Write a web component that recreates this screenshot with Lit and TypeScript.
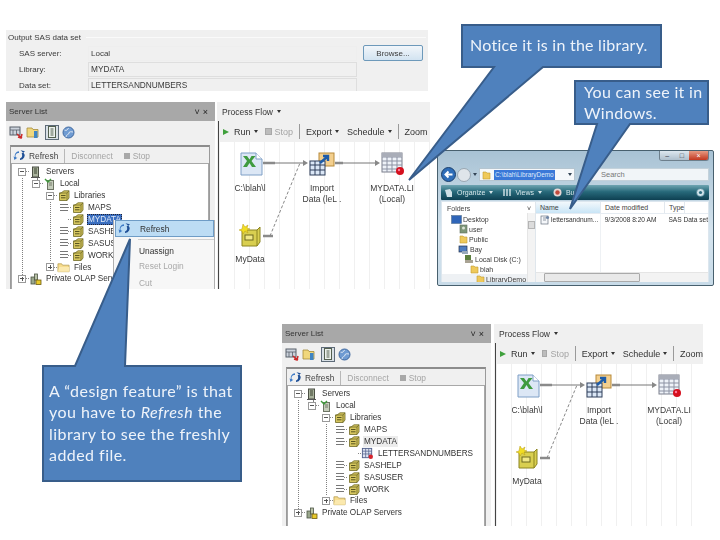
import { LitElement, html, css } from "lit";
import { customElement } from "lit/decorators.js";

const shortcut = (x: number, y: number) => html`<g transform="translate(${x} ${y})"><rect width="8" height="8" fill="#fff" stroke="#222"/><path d="M2 6.5V3h3M2.5 3.5l3 3" stroke="#111" fill="none" stroke-width="1.2"/></g>`;

const icons = {
  refresh: html`<svg width="13" height="13" viewBox="0 0 13 13"><path d="M6 2.2A4.5 4.5 0 0 0 2 8.2L.6 7.2 1.4 11l3-2.2-1.4-.2A3 3 0 0 1 6 4z" fill="#3b78c4"/><path d="M7.5 1.2 10 3.5 8.6 4.6A3.2 3.2 0 0 1 7 9.5V11a4.5 4.5 0 0 0 3.4-7.6L12 2.2z" fill="#1f4f96"/></svg>`,
  server: html`<svg width="11" height="12" viewBox="0 0 11 12"><rect x="2.5" y="1" width="6" height="10" fill="#a9b29c" stroke="#4b4f44"/><path d="M4 3h3M4 5h3M4 7h3" stroke="#39402f"/><path d="M1 11.5h9" stroke="#555"/></svg>`,
  local: html`<svg width="11" height="12" viewBox="0 0 11 12"><rect x="3.5" y="2.5" width="6" height="9" fill="#c5cdbb" stroke="#6d7464"/><path d="M5 5h3M5 7h3" stroke="#747b6b"/><path d="M1 1l3 3 3-3" stroke="#3d9a3a" stroke-width="1.4" fill="none"/></svg>`,
  lib: html`<svg width="12" height="11" viewBox="0 0 12 11"><path d="M3 3 6 .8h5V8l-2 2.5H1.5V3z" fill="#d6c65f" stroke="#6e6a25" stroke-width=".8"/><path d="M1.5 3H9v7.5M9 3l2-2.2" stroke="#6e6a25" stroke-width=".8" fill="none"/><path d="M3 5.5h4.5M3 7.8h4.5" stroke="#5a5620"/></svg>`,
  folder: html`<svg width="14" height="11" viewBox="0 0 14 11"><path d="M1 3V1.5h4L6 3h7v7H1z" fill="#f7dc8d" stroke="#b39a4c" stroke-width=".8"/><path d="M1 10l1.5-5H13v5z" fill="#fbe9ae"/></svg>`,
  olap: html`<svg width="12" height="12" viewBox="0 0 12 12"><rect x="1" y="4" width="4" height="7" fill="#9aa78c" stroke="#4c5444" stroke-width=".8"/><rect x="4.5" y="1" width="3" height="6" fill="#b9c3a8" stroke="#4c5444" stroke-width=".8"/><rect x="6" y="7" width="5" height="4.5" fill="#e7c92c" stroke="#6b5b10" stroke-width=".8"/></svg>`,
  dataset: html`<svg width="14" height="13" viewBox="0 0 14 13"><rect x="1.5" y="1" width="10" height="10" fill="#dfe4f2" stroke="#54628c"/><path d="M1.5 4h10M1.5 7h10M5 1v10M8.3 1v10" stroke="#54628c" stroke-width=".8"/><circle cx="10.5" cy="10" r="2.4" fill="#d8242c"/></svg>`,
  tbIcon1: html`<svg width="14" height="13" viewBox="0 0 14 13"><rect x="1" y="1" width="10" height="8" fill="#ccd3dc" stroke="#59606a"/><path d="M1 4h10M4 4v5M7.5 4v5" stroke="#59606a" stroke-width=".8"/><path d="M8 8l5 4M13 8l-1 4-3-1" stroke="#cc2a2a" stroke-width="1.5" fill="none"/></svg>`,
  tbIcon2: html`<svg width="13" height="13" viewBox="0 0 13 13"><path d="M1 2h5l1 1.5h5V11H1z" fill="#f0d77c" stroke="#a48a3a" stroke-width=".8"/><rect x="8" y="5" width="3.5" height="7" fill="#3f85c4"/></svg>`,
  tbIcon3: html`<svg width="10" height="12" viewBox="0 0 10 12"><rect x="1.5" y=".5" width="7" height="11" fill="#edf1ed" stroke="#53604f"/><path d="M3.5 3h3M3.5 5h3M3.5 7h3M3.5 9h3" stroke="#53604f"/></svg>`,
  globe: html`<svg width="13" height="13" viewBox="0 0 13 13"><circle cx="6.5" cy="6.5" r="5.5" fill="#6f9bd2" stroke="#3f689f"/><path d="M2.5 4c2 1 3 0 4-2M4 11c0-3 3-2 3-4s3-1 4-1" stroke="#dfe8f3" fill="none"/></svg>`,
  excel: html`<svg width="27" height="27" viewBox="0 0 27 27"><path d="M4 1h15l6 6v16H4z" fill="#dce7f5" stroke="#7e9fc6"/><path d="M19 1v6h6" fill="#fff" stroke="#7e9fc6"/><path d="M6 4l4 5-4 6h4l2.5-4 2.5 4h4l-4.500-6 4-5h-4l-2 3.500L10 4z" fill="#3f9b3f"/>${shortcut(1, 18)}</svg>`,
  imp: html`<svg width="26" height="27" viewBox="0 0 26 27"><rect x="10" y="1" width="15" height="13" fill="#f3cf8e" stroke="#b78a3a"/><rect x="1" y="9" width="15" height="14" fill="#dbe7f6" stroke="#2f3f5a"/><path d="M1 13h15M1 18h15M6 9v14M11 9v14" stroke="#2f3f5a"/><path d="M11 11l7-6M14 4h5v5" stroke="#1e5ca8" stroke-width="2.4" fill="none"/>${shortcut(2, 18)}</svg>`,
  table: html`<svg width="27" height="27" viewBox="0 0 27 27"><rect x="3" y="1" width="20" height="19" fill="#eef2f8" stroke="#7b7f8c"/><path d="M3 5h20M3 9h20M3 13h20M3 17h20M8 5v15M13 5v15M18 5v15" stroke="#8c92a3"/><rect x="3" y="1" width="20" height="4" fill="#a9adb8"/><circle cx="21" cy="19" r="4" fill="#d5101e"/><circle cx="20" cy="18" r="1.2" fill="#f79"/>${shortcut(1, 18)}</svg>`,
  mydata: html`<svg width="22" height="24" viewBox="0 0 22 24"><path d="M4 7h14l3-3v15l-3 4H3V7z" fill="#d9cf50" stroke="#8c8520"/><path d="M18 7v16" stroke="#8c8520"/><rect x="6" y="12" width="8" height="5" fill="#f0e888" stroke="#6e6a20"/><path d="M4 1l2 3 3-2-1 3 3 1-3 1 1 3-3-2-2 3-1-3-3-1 3-1z" fill="#f1dd22" stroke="#b89c18" stroke-width=".5"/></svg>`,
  back: html`<svg width="15" height="15" viewBox="0 0 15 15"><circle cx="7.5" cy="7.5" r="7" fill="#2e6db8" stroke="#1c3f6b"/><path d="M11.5 7.5H5M7.500 4.500l-3 3 3 3" stroke="#fff" stroke-width="2" fill="none"/></svg>`,
  forward: html`<svg width="14" height="14" viewBox="0 0 14 14"><circle cx="7" cy="7" r="6.5" fill="#dfe5ea" stroke="#9aa7b2"/></svg>`,
  xfolder: html`<svg width="9" height="10" viewBox="0 0 9 10"><path d="M1 2h3l1 1h3v6H1z" fill="#efc95a" stroke="#c09a30" stroke-width=".6"/></svg>`,
  drive: html`<svg width="10" height="10" viewBox="0 0 10 10"><rect x="1" y="1" width="6" height="5" fill="#5c7f3f"/><rect x="1" y="6" width="8" height="3" fill="#a9a393"/></svg>`,
  user: html`<svg width="9" height="10" viewBox="0 0 9 10"><rect x="1" y="1" width="7" height="8" fill="#7d9678" stroke="#5f6f5e" stroke-width=".6"/><circle cx="4.5" cy="4" r="1.5" fill="#dce3d6"/></svg>`,
  desktop: html`<svg width="11" height="9" viewBox="0 0 11 9"><rect x=".5" y=".5" width="10" height="8" fill="#2f65b8" stroke="#55728f" stroke-width=".6"/></svg>`,
  net: html`<svg width="11" height="9" viewBox="0 0 11 9"><rect x="1" y="1" width="8" height="6" fill="#4d7cc0" stroke="#21324d" stroke-width=".7"/><rect x="4" y="6" width="6" height="3" fill="#9ab"/></svg>`,
  sasfile: html`<svg width="10" height="10" viewBox="0 0 10 10"><rect x="1" y="1" width="7" height="8" fill="#f5f7fa" stroke="#67717f" stroke-width=".7"/><path d="M3 3h3M3 5h3" stroke="#67717f" stroke-width=".7"/><circle cx="7.5" cy="2.5" r="1.6" fill="#6f86a6"/></svg>`,
  burn: html`<svg width="9" height="9" viewBox="0 0 9 9"><circle cx="4.5" cy="4.5" r="4" fill="#e8d7d5"/><circle cx="4.5" cy="4.5" r="2.2" fill="#c24a3c"/></svg>`,
  org: html`<svg width="9" height="10" viewBox="0 0 9 10"><path d="M1 2l5-1 2 3v5H3z" fill="#cfe0e6"/></svg>`,
  views: html`<svg width="8" height="9" viewBox="0 0 8 9"><path d="M1 1v7M4 1v7M7 1v7" stroke="#e4eff2" stroke-width="1.3"/></svg>`,
  help: html`<svg width="9" height="9" viewBox="0 0 9 9"><circle cx="4.5" cy="4.5" r="4" fill="#cfe3ea" stroke="#2f6d82" stroke-width=".6"/><circle cx="4.5" cy="4.5" r="1.6" fill="#2f6d82"/></svg>`,
};

type Row = { level: number; exp: "minus" | "plus" | "leaf" | "dots" | "link"; icon: any; label: string; sel?: "blue" | "soft" };

const rowsBase: Row[] = [
  { level: 0, exp: "minus", icon: icons.server, label: "Servers" },
  { level: 1, exp: "minus", icon: icons.local, label: "Local" },
  { level: 2, exp: "minus", icon: icons.lib, label: "Libraries" },
  { level: 3, exp: "leaf", icon: icons.lib, label: "MAPS" },
];
const rowsEnd: Row[] = [
  { level: 3, exp: "leaf", icon: icons.lib, label: "SASHELP" },
  { level: 3, exp: "leaf", icon: icons.lib, label: "SASUSER" },
  { level: 3, exp: "leaf", icon: icons.lib, label: "WORK" },
  { level: 2, exp: "plus", icon: icons.folder, label: "Files" },
  { level: 0, exp: "plus", icon: icons.olap, label: "Private OLAP Servers" },
];

const xTree = ["Desktop", "user", "Public", "Bay", "Local Disk (C:)", "blah", "LibraryDemo"];
const xIcons = [icons.desktop, icons.user, icons.xfolder, icons.net, icons.drive, icons.xfolder, icons.xfolder];
const xIndent = [9, 17, 17, 16, 22, 28, 34];

@customElement("app-root")
export class AppRoot extends LitElement {
  static styles = css`
    :host { display: block; position: relative; width: 720px; height: 540px; background: #fff; overflow: hidden; font-family: "Liberation Sans", Arial, sans-serif; color: #333; }
    * { box-sizing: border-box; }
    .win { position: absolute; overflow: hidden; filter: blur(0.35px); }

    .form { left: 6px; top: 30px; width: 422px; height: 61px; background: #f0f0f0; color: #3a3a3a; display: flex; flex-direction: column; padding: 2px 0 0 2px; }
    .legend { display: flex; align-items: center; gap: 5px; height: 11px; font-size: 8px; white-space: nowrap; flex: none; }
    .legend i { flex: 1; height: 1px; background: #fafafa; margin-right: 2px; }
    .frow { display: flex; align-items: center; height: 16px; padding-left: 11px; flex: none; }
    .first { margin-top: 2px; }
    .flabel { width: 69px; font-size: 8px; }
    .ffield { width: 269px; height: 15px; background: #f0f0f0; border: 1px solid #dedede; padding: 0 2px; display: flex; align-items: center; font-size: 8.3px; }
    .frow.first .ffield { border-color: #eeeeee; font-size: 8px; }
    .browse { margin-left: 6px; width: 60px; height: 16px; border: 1px solid #6d99ba; border-radius: 2px; background: linear-gradient(#f2f6fa, #d2e3f1); font-size: 8px; display: flex; align-items: center; justify-content: center; }

    .slist { width: 209px; background: #f0f0f0; }
    .shead { height: 19px; background: #a8a8a8; display: flex; align-items: center; justify-content: space-between; padding: 0 4px 0 3px; font-size: 8px; color: #333; }
    .shead b { font-weight: 400; font-size: 9px; letter-spacing: 3px; color: #222; }
    .stools { height: 22px; display: flex; align-items: center; gap: 3px; padding-left: 3px; }
    .stools .pressed { width: 14px; height: 15px; background: #d9e0e6; border: 1px solid #5e6b78; display: flex; align-items: center; justify-content: center; margin: 0 0 0 3px; }
    .sframe { position: absolute; left: 4px; right: 5px; top: 43px; bottom: 0; border: 1px solid #9a9a9a; border-top: 2px solid #8c8c8c; border-bottom: 0; background: #f0f0f0; display: flex; flex-direction: column; }
    .stabs { height: 17px; display: flex; align-items: center; gap: 3px; padding-left: 2px; font-size: 8.4px; color: #444; flex: none; }
    .stabs .dis { color: #a4a4a4; }
    .stabs .sep { width: 1px; height: 14px; background: #b8b8b8; margin: 0 3px 0 3px; }
    .sq { width: 6px; height: 6px; background: #a8a8a8; margin-left: 8px; }
    .tree { position: relative; flex: 1; background: #fff; border: 1px solid #a8a8a8; border-bottom: 0; padding-top: 2px; margin-top: -1px; }
    .row { height: 11.9px; display: flex; align-items: center; white-space: nowrap; font-size: 8.2px; color: #333; }
    .exp { width: 8px; height: 8px; flex: none; border: 1px solid #9a9a9a; background: #fff; position: relative; }
    .exp::before { content: ""; position: absolute; left: 1px; right: 1px; top: 2.5px; height: 1px; background: #555; }
    .exp.plus::after { content: ""; position: absolute; top: 1px; bottom: 1px; left: 2.5px; width: 1px; background: #555; }
    .exp.leaf { border: 0; background: repeating-linear-gradient(#777 0 1px, #fff 1px 3px); }
    .exp.leaf::before { display: none; }
    .exp.dots, .exp.link { border: 0; background: transparent; }
    .exp.dots::before, .exp.link::before { display: none; }
    .dash { width: 3px; flex: none; border-top: 1px dotted #888; }
    .ic { width: 13px; height: 12px; display: flex; align-items: center; justify-content: center; flex: none; }
    .lbl { margin-left: 3px; padding: 0 1px; line-height: 11px; }
    .lbl.blue { background: #3b6fc0; color: #dfe9f8; outline: 1px dotted #223; outline-offset: -1px; }
    .lbl.soft { background: #ececec; }
    .vline { position: absolute; width: 0; border-left: 1px dotted #808080; }
    .menu { position: absolute; left: 107px; top: 118px; width: 102px; height: 69px; background: #f7f7f7; border: 1px solid #b0b0b0; border-top: 0; border-bottom: 0; font-size: 8.4px; color: #333; display: flex; flex-direction: column; overflow: hidden; }
    .mhi { height: 17px; display: flex; align-items: center; background: #bcdcf4; border: 1px solid #6e9cc6; margin: 0 0 0 1px; padding-left: 2px; gap: 9px; flex: none; }
    .mline { height: 1px; background: #d0d0d0; margin: 2px 0 0 24px; flex: none; }
    .mitem { height: 15px; display: flex; align-items: center; padding-left: 25px; flex: none; }
    .mitem.dis { color: #a8a8a8; }
    .mfirst { margin-top: 3px; }
    .mcut { margin-top: 4px; height: 11px; }

    .flow { background: #f0f0f0; color: #333; }
    .fhead { height: 19px; display: flex; align-items: center; gap: 4px; padding-left: 5px; font-size: 8.5px; }
    .caret { display: inline-block; width: 0; height: 0; border: 2.5px solid transparent; border-top: 3px solid #333; border-bottom: 0; }
    .fbody { position: absolute; left: 1px; top: 19px; right: 0; bottom: 0; border-left: 1px solid #444; display: flex; flex-direction: column; }
    .ftools { height: 21px; flex: none; display: flex; align-items: center; gap: 3px; padding-left: 4px; font-size: 9px; white-space: nowrap; overflow: hidden; }
    .ftools .dis { color: #a4a4a4; }
    .play { width: 0; height: 0; border: 3.5px solid transparent; border-left: 6px solid #3fa03c; border-right: 0; margin-right: 2px; }
    .fsq { width: 7px; height: 7px; background: #bcbcbc; border: 1px solid #a8a8a8; margin-left: 4px; }
    .fsep { width: 1px; height: 15px; background: #9a9a9a; margin: 0 3px; }
    .schedule { margin-left: 5px; }
    .canvas { position: relative; flex: 1; background: #fff repeating-linear-gradient(90deg, #f0f0f0 0 1px, #fff 1px 15px); }
    .node { position: absolute; display: flex; flex-direction: column; align-items: center; text-align: center; width: 70px; font-size: 8.5px; line-height: 10.5px; color: #3a3a3a; }
    .node .nic { height: 27px; margin-bottom: 4px; }
    .wires { position: absolute; left: 0; top: 0; width: 213px; height: 200px; }

    .xp { left: 437px; top: 150px; width: 277px; height: 136px; border: 1px solid #48606e; border-radius: 2px; background: linear-gradient(#a8c2d4, #d5e4ee 60%, #c8dbe8); font-size: 7px; display: flex; flex-direction: column; padding: 0 4px 0 3px; }
    .xtitle { height: 16px; flex: none; display: flex; justify-content: flex-end; }
    .xctl { width: 50px; height: 10px; display: flex; border: 1px solid #6d7f8c; border-top: 0; border-radius: 0 0 3px 3px; overflow: hidden; }
    .xctl span { flex: 1; background: linear-gradient(#dde7ef, #aebfcc); display: flex; align-items: center; justify-content: center; font-size: 7px; line-height: 1; color: #334; }
    .xctl span.x { flex: 1.3; background: linear-gradient(#e69a82, #c2371f); color: #fff; }
    .xaddr { height: 15px; flex: none; display: flex; align-items: center; gap: 1px; }
    .xdrop { width: 0; height: 0; border: 2.5px solid transparent; border-top: 3px solid #345; border-bottom: 0; margin: 0 1px; }
    .xbar { display: flex; align-items: center; width: 96px; height: 13px; background: #f5f8fb; border: 1px solid #b5c5d0; padding-left: 2px; gap: 3px; }
    .xsel { background: #3a78d8; color: #dfeafa; padding: 0 1px; white-space: nowrap; font-size: 6.4px; line-height: 10px; }
    .xbar .xdrop { margin-left: auto; margin-right: 2px; }
    .xsearch { flex: 1; height: 13px; background: #f1f5f8; border: 1px solid #c4d2db; margin-left: 6px; font-size: 7.5px; color: #777; padding-left: 18px; line-height: 11px; }
    .xtool { height: 15px; margin-top: 3px; flex: none; background: linear-gradient(#6fa5b2 0, #27697a 45%, #0e4052 100%); display: flex; align-items: center; gap: 4px; padding: 0 4px 0 3px; color: #d6e6ea; font-size: 7px; border-radius: 1px; }
    .xtool .sp { margin-left: auto; display: flex; }
    .xcar { border-top-color: #d6e6ea; }
    .views { margin-left: 6px; }
    .burn { margin-left: 7px; }
    .xbody { flex: 1; background: #fff; display: flex; border: 1px solid #dce6ee; border-bottom: 0; margin-top: 1px; min-height: 0; }
    .xnav { width: 94px; flex: none; position: relative; border-right: 1px solid #dfe6ec; color: #444; overflow: hidden; }
    .xnavh { height: 12px; font-size: 7px; padding-left: 5px; display: flex; justify-content: space-between; align-items: center; padding-right: 4px; }
    .xi { display: flex; align-items: center; gap: 1px; height: 10px; font-size: 7px; white-space: nowrap; color: #3a3a3a; }
    .xi.sel { background: #eef1f4; }
    .xi:first-of-type { margin-top: 2px; }
    .xscroll { position: absolute; right: 0; top: 11px; bottom: 0; width: 8px; background: #f3f3f3; border-left: 1px solid #e5e5e5; }
    .xscroll i { position: absolute; left: 0; top: 8px; width: 7px; height: 8px; background: #dcdcdc; border: 1px solid #b5b5b5; }
    .xlist { flex: 1; display: flex; flex-direction: column; position: relative; min-width: 0; }
    .xcols { height: 12px; display: flex; background: #fff; border-bottom: 1px solid #e6ecf2; font-size: 7px; color: #444; flex: none; }
    .xcols span { padding-left: 4px; border-right: 1px solid #e2e8ee; line-height: 11px; }
    .xcols .c1, .xfile .c1 { width: 65px; background: linear-gradient(#f2f8fc, #c9e5f6); }
    .xfile .c1 { background: none; display: flex; gap: 1px; align-items: center; }
    .xcols .c2, .xfile .c2 { width: 64px; }
    .xfile { display: flex; height: 11px; font-size: 6.6px; align-items: center; white-space: nowrap; color: #333; }
    .xfile span { padding-left: 4px; }
    .xcolrule { position: absolute; left: 64px; top: 12px; bottom: 10px; width: 1px; background: #eef1f4; }
    .xh { position: absolute; left: 0; right: 0; bottom: 0; height: 10px; background: #f3f3f3; border-top: 1px solid #e5e5e5; }
    .xh i { position: absolute; left: 8px; top: 0; width: 96px; height: 9px; background: #e9e9e9; border: 1px solid #aaa; border-radius: 1px; }
    .xstrip { height: 3px; flex: none; }

    .tails { position: absolute; left: 0; top: 0; width: 720px; height: 540px; pointer-events: none; }
    .call { position: absolute; font-family: Lato, "Open Sans", sans-serif; color: #eef3fa; font-size: 16px; line-height: 21.4px; white-space: nowrap; }
    .c-notice { left: 470px; top: 34px; letter-spacing: 0.25px; }
    .c-win { left: 584px; top: 81px; letter-spacing: 0.3px; }
    .c-des { left: 49px; top: 380px; letter-spacing: 0.45px; }
  `;

  private serverList(style: string, rows: Row[], menu: boolean) {
    const y = (i: number) => 2 + i * 11.9;
    const libIdx = rows.findIndex((r) => r.label === "Libraries");
    const filesIdx = rows.findIndex((r) => r.label === "Files");
    const last = rows.length - 1;
    return html`<div class="win slist" style=${style}>
      <div class="shead"><span>Server List</span><b>˅×</b></div>
      <div class="stools">${icons.tbIcon1}${icons.tbIcon2}<span class="pressed">${icons.tbIcon3}</span>${icons.globe}</div>
      <div class="sframe">
        <div class="stabs">${icons.refresh}<span>Refresh</span><i class="sep"></i><span class="dis">Disconnect</span><i class="sq"></i><span class="dis">Stop</span></div>
        <div class="tree">
          <span class="vline" style="left:10px;top:${y(1)}px;height:${y(last) - y(1) + 2}px"></span>
          <span class="vline" style="left:25px;top:${y(1)}px;height:6px"></span>
          <span class="vline" style="left:38px;top:${y(libIdx + 1)}px;height:${y(filesIdx) - y(libIdx + 1)}px"></span>
          ${rows.map((r) => html`<div class="row" style="padding-left:${6 + r.level * 14}px">
            <span class="exp ${r.exp}"></span><span class="dash"></span>
            <span class="ic">${r.icon}</span><span class="lbl ${r.sel ?? ""}">${r.label}</span></div>`)}
        </div>
      </div>
      ${menu ? html`<div class="menu">
        <div class="mhi">${icons.refresh}<span>Refresh</span></div>
        <div class="mline"></div>
        <div class="mitem mfirst">Unassign</div>
        <div class="mitem dis">Reset Login</div>
        <div class="mitem dis mcut">Cut</div>
      </div>` : ""}
    </div>`;
  }

  private flow(style: string) {
    return html`<div class="win flow" style=${style}>
      <div class="fhead"><span>Process Flow</span><i class="caret"></i></div>
      <div class="fbody">
        <div class="ftools"><i class="play"></i><span>Run</span><i class="caret"></i><i class="fsq"></i><span class="dis">Stop</span><i class="fsep"></i><span>Export</span><i class="caret"></i><span class="schedule">Schedule</span><i class="caret"></i><i class="fsep"></i><span>Zoom</span></div>
        <div class="canvas">
          <svg class="wires" viewBox="0 0 213 200">
            <path d="M44 21h12M116 21h8M44 94h10" stroke="#8a8a8a" stroke-width="2.5" fill="none"/>
            <path d="M56 21h29M124 21h33" stroke="#777" fill="none"/>
            <path d="M51 94 81 21" stroke="#888" stroke-dasharray="3 2" fill="none"/>
            <path d="M84 18l5 3-5 3zM156 18l5 3-5 3z" fill="#888"/>
          </svg>
          <div class="node" style="left:-4px;top:10px"><span class="nic">${icons.excel}</span>C:\\blah\\l</div>
          <div class="node" style="left:68px;top:10px"><span class="nic">${icons.imp}</span>Import<br>Data (leL .</div>
          <div class="node" style="left:138px;top:10px"><span class="nic">${icons.table}</span>MYDATA.LI<br>(Local)</div>
          <div class="node" style="left:-4px;top:81px"><span class="nic">${icons.mydata}</span>MyData</div>
        </div>
      </div>
    </div>`;
  }

  render() {
    const rows1: Row[] = [...rowsBase, { level: 3, exp: "dots", icon: icons.lib, label: "MYDATA", sel: "blue" }, ...rowsEnd];
    const rows2: Row[] = [...rowsBase, { level: 3, exp: "leaf", icon: icons.lib, label: "MYDATA", sel: "soft" }, { level: 4, exp: "link", icon: icons.dataset, label: "LETTERSANDNUMBERS" }, ...rowsEnd];
    return html`
      <div class="win form">
        <div class="legend"><span>Output SAS data set</span><i></i></div>
        <div class="frow first"><span class="flabel">SAS server:</span><span class="ffield">Local</span><span class="browse">Browse...</span></div>
        <div class="frow"><span class="flabel">Library:</span><span class="ffield">MYDATA</span></div>
        <div class="frow"><span class="flabel">Data set:</span><span class="ffield">LETTERSANDNUMBERS</span></div>
      </div>

      ${this.serverList("left:6px;top:102px;height:187px", rows1, true)}
      ${this.flow("left:217px;top:102px;width:213px;height:187px")}

      <div class="win xp">
        <div class="xtitle"><div class="xctl"><span>–</span><span>□</span><span class="x">×</span></div></div>
        <div class="xaddr">${icons.back}${icons.forward}<i class="xdrop"></i>
          <div class="xbar">${icons.xfolder}<span class="xsel">C:\\blah\\LibraryDemo</span><i class="xdrop"></i></div>
          <div class="xsearch">Search</div>
        </div>
        <div class="xtool">${icons.org}<span>Organize</span><i class="caret xcar"></i><span class="views">${icons.views}</span><span>Views</span><i class="caret xcar"></i><span class="burn">${icons.burn}</span><span>Burn</span><span class="sp">${icons.help}</span></div>
        <div class="xbody">
          <div class="xnav">
            <div class="xnavh"><span>Folders</span><span>˅</span></div>
            ${xTree.map((t, i) => html`<div class="xi ${i === 6 ? "sel" : ""}" style="padding-left:${xIndent[i]}px">${xIcons[i]}<span>${t}</span></div>`)}
            <div class="xscroll"><i></i></div>
          </div>
          <div class="xlist">
            <div class="xcols"><span class="c1">Name</span><span class="c2">Date modified</span><span>Type</span></div>
            <div class="xfile"><span class="c1">${icons.sasfile}lettersandnum...</span><span class="c2">9/3/2008 8:20 AM</span><span>SAS Data set</span></div>
            <i class="xcolrule"></i>
            <div class="xh"><i></i></div>
          </div>
        </div>
        <div class="xstrip"></div>
      </div>

      ${this.serverList("left:282px;top:324px;height:202px", rows2, false)}
      ${this.flow("left:494px;top:324px;width:209px;height:202px")}

      <svg class="tails" viewBox="0 0 720 540">
        <g fill="#4f81bd" stroke="#385d8a" stroke-width="2">
          <path d="M462 25H661V67H543L409 180 494 67H462Z"/>
          <path d="M575 81H708V124H630L570 209 597 124H575Z"/>
          <path d="M43 366H75L130 239 125 366H241V481H43Z"/>
        </g>
      </svg>
      <div class="call c-notice">Notice it is in the library.</div>
      <div class="call c-win">You can see it in<br>Windows.</div>
      <div class="call c-des">A “design feature” is that<br>you have to <em>Refresh</em> the<br>library to see the freshly<br>added file.</div>
    `;
  }
}
